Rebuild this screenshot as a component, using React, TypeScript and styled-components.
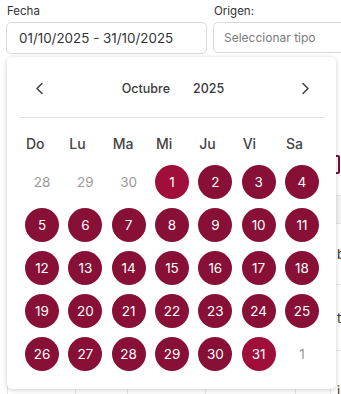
import React from 'react';
import styled, { createGlobalStyle } from 'styled-components';

const GlobalStyle = createGlobalStyle`
  html, body {
    margin: 0;
    padding: 0;
    background: #fff;
    overflow: hidden;
  }
  body {
    font-family: Inter, "Noto Sans", "Liberation Sans", sans-serif;
    color: #333;
  }
`;

const Page = styled.div`
  position: relative;
  width: 341px;
  height: 394px;
  overflow: hidden;
`;

const Filters = styled.div`
  display: flex;
  gap: 6px;
  padding: 4px 0 0 6px;
`;

const Field = styled.div<{ $width: number }>`
  display: flex;
  flex-direction: column;
  flex: 0 0 ${({ $width }) => $width}px;
`;

const Label = styled.label`
  font-size: 11.5px;
  line-height: 15px;
  color: #333;
  margin: 0 0 3px 1px;
`;

const InputBox = styled.div<{ $placeholder?: boolean }>`
  box-sizing: border-box;
  height: ${({ $placeholder }) => ($placeholder ? 31 : 32)}px;
  border: 1px solid #d9d9d9;
  border-radius: 5px;
  display: flex;
  align-items: center;
  padding-left: ${({ $placeholder }) => ($placeholder ? 10 : 12)}px;
  font-size: ${({ $placeholder }) => ($placeholder ? 12 : 13.4)}px;
  color: ${({ $placeholder }) => ($placeholder ? '#7a7a7a' : '#333')};
  white-space: nowrap;
`;

const Toolbar = styled.div`
  height: 141px;
  display: flex;
  justify-content: flex-end;
  align-items: flex-start;
  padding-right: 1px;
`;

const OutlineButton = styled.div`
  margin-top: 101px;
  width: 26px;
  height: 15px;
  border: 2px solid #7a1030;
  border-radius: 2px;
`;

const Table = styled.table`
  margin-left: 7px;
  border-collapse: collapse;
  table-layout: fixed;
  width: 400px;
  font-size: 13px;
  color: #333;
`;

const HeadCell = styled.th`
  height: 27px;
  background: #f4f4f4;
  border: 1px solid #e6e6e6;
  padding: 0;
`;

const Cell = styled.td<{ $h?: number }>`
  height: ${({ $h }) => $h ?? 60}px;
  border: 1px solid #e6e6e6;
  padding: 0 6px;
  white-space: nowrap;
  overflow: hidden;
`;

const Popup = styled.div`
  position: absolute;
  left: 7px;
  top: 57px;
  width: 329px;
  height: 332px;
  box-sizing: border-box;
  background: #fff;
  border-radius: 5px;
  box-shadow: 0 1px 5px rgba(0, 0, 0, 0.2);
  padding: 19px 17px 0 18px;
`;

const NavRow = styled.div`
  height: 24px;
  display: flex;
  align-items: center;
  justify-content: space-between;
  padding: 0 8px 0 9px;
`;

const NavButton = styled.button`
  background: none;
  border: none;
  padding: 0;
  width: 10px;
  height: 14px;
  display: flex;
  align-items: center;
  justify-content: center;
  color: #444;
  cursor: pointer;
`;

const MonthYear = styled.div`
  display: flex;
  gap: 23px;
  font-size: 12.5px;
  font-weight: 500;
  color: #3a3a3a;
  margin-left: 1px;
`;

const Divider = styled.div`
  height: 1px;
  background: #e3e3e3;
  margin: 17px -5px 0 -5px;
`;

const Grid = styled.div`
  display: grid;
  grid-template-columns: repeat(7, 34px);
  justify-content: space-between;
`;

const WeekRow = styled(Grid)`
  margin-top: 15px;
  height: 20px;
  align-items: center;
`;

const WeekDay = styled.div`
  font-size: 14px;
  font-weight: 500;
  color: #444;
  padding-left: 1px;
`;

const DayGrid = styled(Grid)`
  margin-top: 12px;
  row-gap: 9px;
`;

const Day = styled.div<{ $kind: 'out' | 'in' | 'edge' }>`
  width: 34px;
  height: 34px;
  border-radius: 50%;
  display: flex;
  align-items: center;
  justify-content: center;
  font-size: 13.5px;
  color: ${({ $kind }) => ($kind === 'out' ? '#9a9a9a' : '#fff')};
  background: ${({ $kind }) =>
    $kind === 'out' ? 'transparent' : $kind === 'edge' ? '#a00f39' : '#880f35'};
`;

const Chevron = ({ dir }: { dir: 'left' | 'right' }) => (
  <svg width="9" height="13" viewBox="0 0 9 13" fill="none" stroke="currentColor" strokeWidth="1.6" strokeLinecap="round" strokeLinejoin="round">
    {dir === 'left' ? <polyline points="7,1.5 2,6.5 7,11.5" /> : <polyline points="2,1.5 7,6.5 2,11.5" />}
  </svg>
);

const weekDays = ['Do', 'Lu', 'Ma', 'Mi', 'Ju', 'Vi', 'Sa'];

const days: { n: number; kind: 'out' | 'in' | 'edge' }[] = [
  { n: 28, kind: 'out' },
  { n: 29, kind: 'out' },
  { n: 30, kind: 'out' },
  ...Array.from({ length: 31 }, (_, i) => ({
    n: i + 1,
    kind: (i === 0 || i === 30 ? 'edge' : 'in') as 'edge' | 'in',
  })),
  { n: 1, kind: 'out' },
];

const cols = [68, 52, 78, 90, 35, 77];

const rows = [
  { h: 60, last: 'borrador' },
  { h: 65, last: 'total' },
  { h: 80, last: 'importe' },
];

export default function App() {
  return (
    <Page>
      <GlobalStyle />
      <Filters>
        <Field $width={201}>
          <Label>Fecha</Label>
          <InputBox>01/10/2025 - 31/10/2025</InputBox>
        </Field>
        <Field $width={160}>
          <Label>Origen:</Label>
          <InputBox $placeholder>Seleccionar tipo</InputBox>
        </Field>
      </Filters>

      <Toolbar>
        <OutlineButton />
      </Toolbar>

      <Table>
        <colgroup>
          {cols.map((w, i) => (
            <col key={i} style={{ width: w }} />
          ))}
        </colgroup>
        <thead>
          <tr>
            {cols.map((_, i) => (
              <HeadCell key={i} />
            ))}
          </tr>
        </thead>
        <tbody>
          {rows.map((r, i) => (
            <tr key={i}>
              {cols.map((_, j) => (
                <Cell key={j} $h={r.h}>
                  {j === cols.length - 1 ? r.last : ''}
                </Cell>
              ))}
            </tr>
          ))}
        </tbody>
      </Table>

      <Popup>
        <NavRow>
          <NavButton aria-label="Mes anterior">
            <Chevron dir="left" />
          </NavButton>
          <MonthYear>
            <span>Octubre</span>
            <span>2025</span>
          </MonthYear>
          <NavButton aria-label="Mes siguiente">
            <Chevron dir="right" />
          </NavButton>
        </NavRow>
        <Divider />
        <WeekRow>
          {weekDays.map((d) => (
            <WeekDay key={d}>{d}</WeekDay>
          ))}
        </WeekRow>
        <DayGrid>
          {days.map((d, i) => (
            <Day key={i} $kind={d.kind}>
              {d.n}
            </Day>
          ))}
        </DayGrid>
      </Popup>
    </Page>
  );
}
